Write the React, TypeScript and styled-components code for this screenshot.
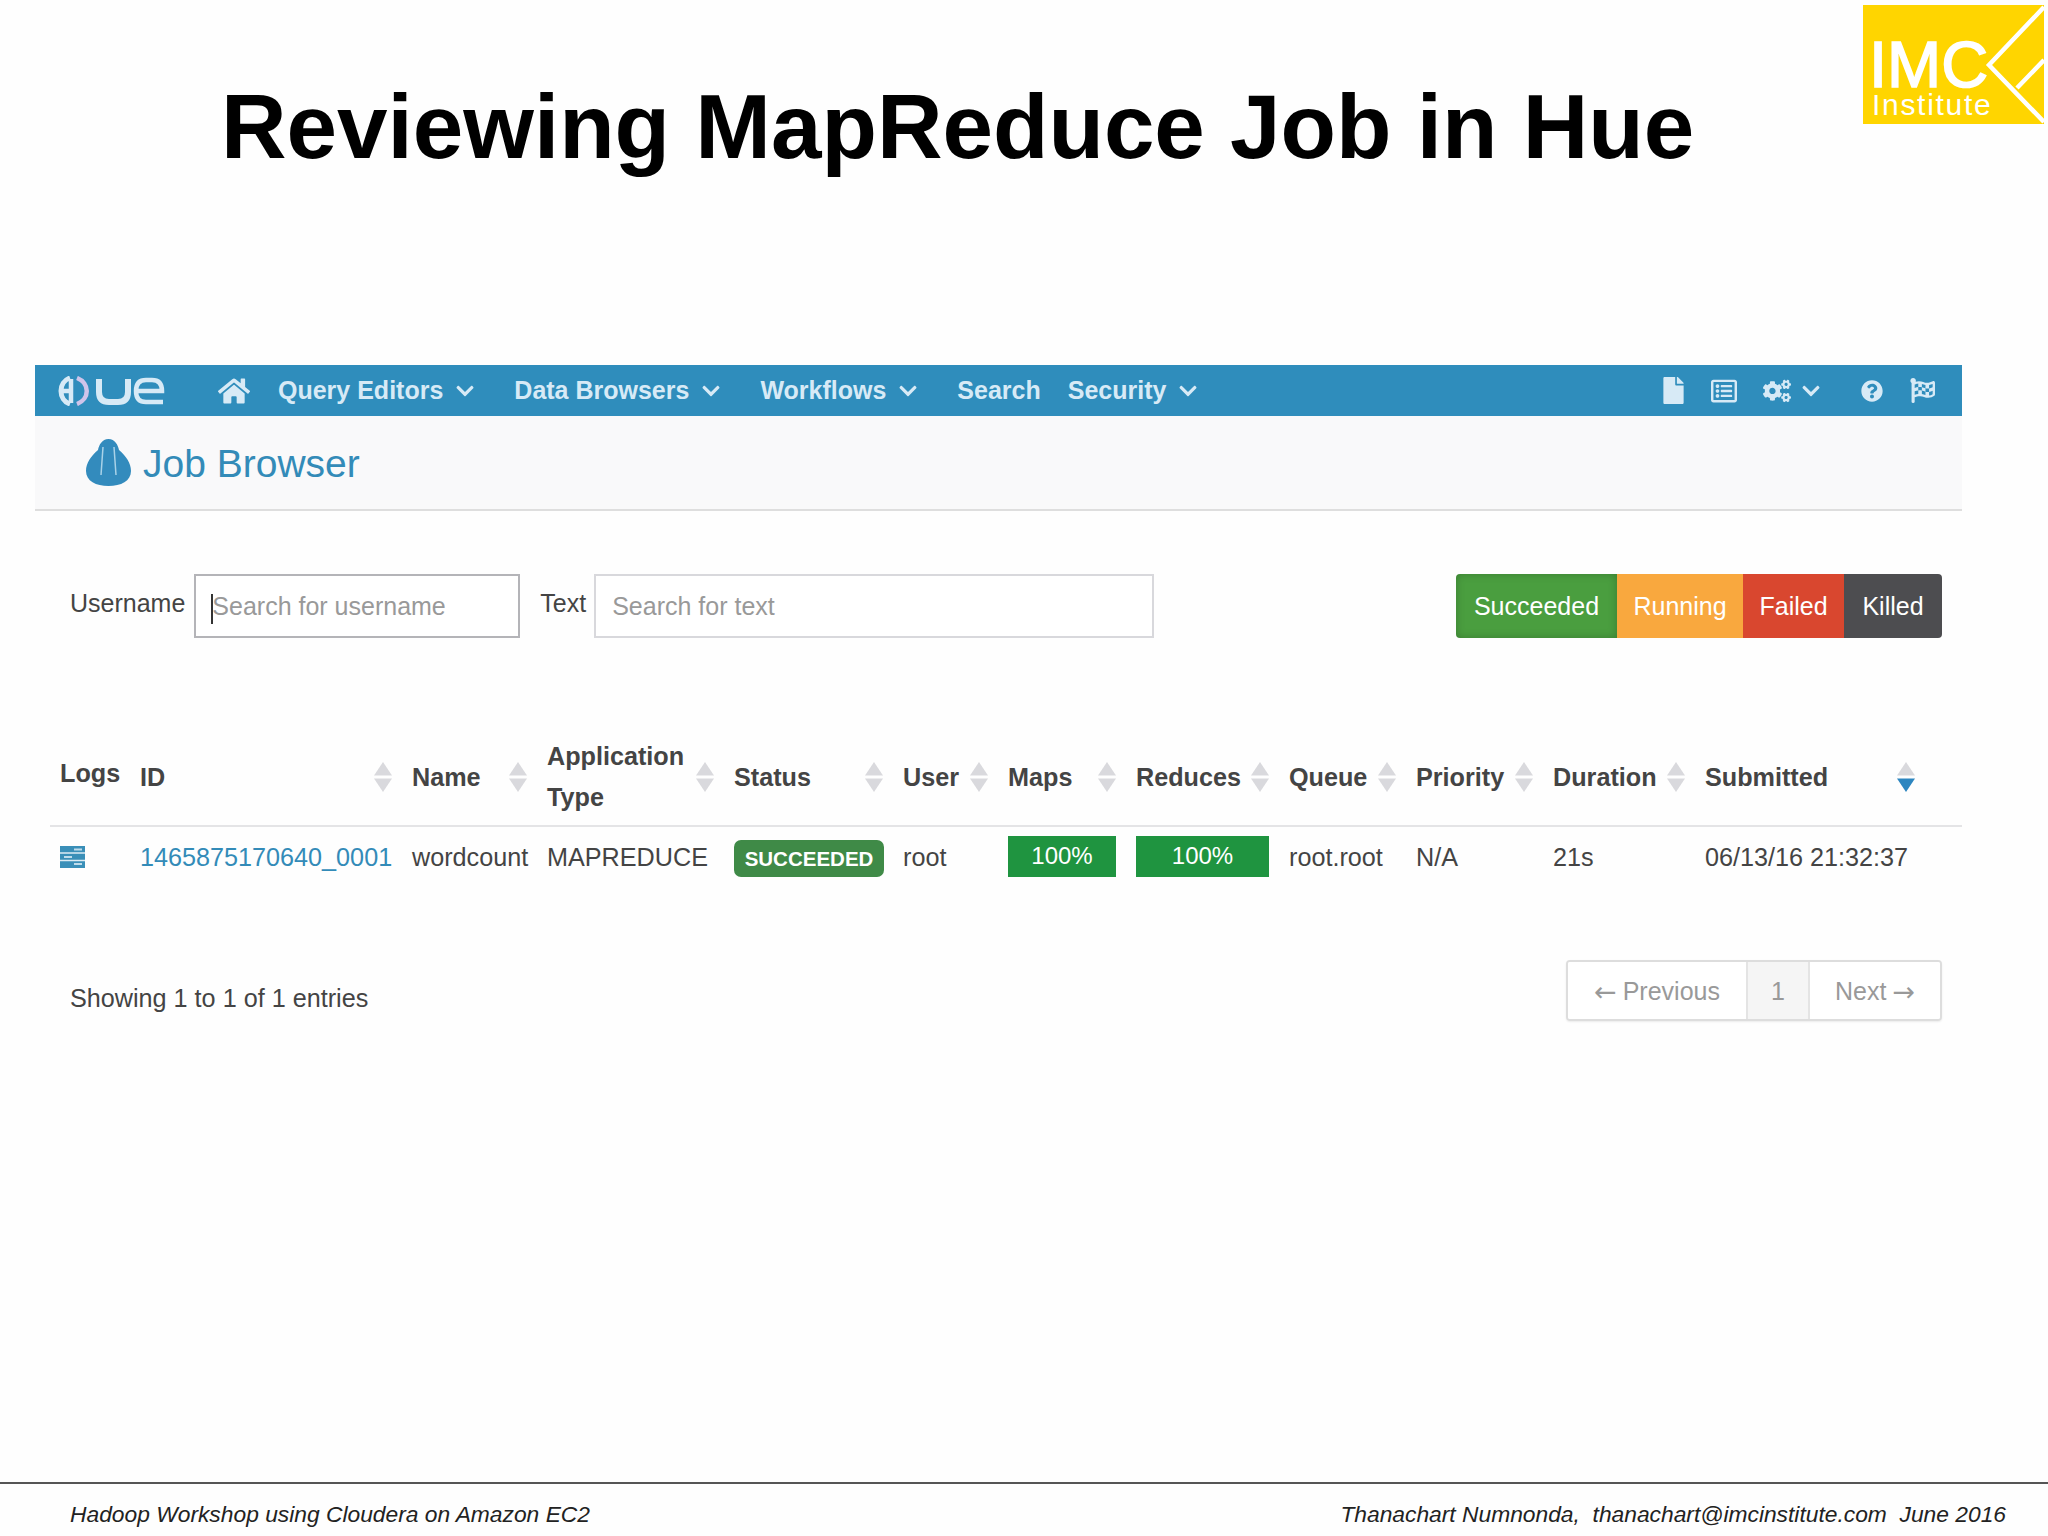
import styled, { createGlobalStyle } from "styled-components"
import { FaHome, FaChevronDown, FaFile, FaRegListAlt, FaCogs, FaQuestionCircle, FaFlagCheckered } from "react-icons/fa"

const GlobalStyle = createGlobalStyle`
  html, body {
    margin: 0;
    padding: 0;
    background: #FEFEFE;
    font-family: "Liberation Sans", Arial, sans-serif;
  }
  * { box-sizing: border-box; }
`

const Slide = styled.div`
  width: 2048px;
  height: 1536px;
  display: flex;
  flex-direction: column;
  overflow: hidden;
`

const SlideHeader = styled.header`
  height: 365px;
  display: flex;
  align-items: flex-start;
  justify-content: space-between;
  padding: 5px 4px 0 221px;
`

const SlideTitle = styled.h1`
  margin: 68px 0 0;
  font-size: 90.8px;
  line-height: 108px;
  font-weight: 700;
  color: #000;
  white-space: nowrap;
`

const Frame = styled.div`
  width: 1927px;
  margin-left: 35px;
`

const NavBar = styled.nav`
  height: 51px;
  background: #2F8DBC;
  color: #D7EAF6;
  display: flex;
  align-items: center;
  padding: 0 27px 0 21px;
  font-size: 25px;
  font-weight: 700;
`

const HueMark = styled.svg`
  width: 109px;
  height: 30px;
  margin-right: 53px;
  flex: none;
`

const HomeLink = styled.span`
  display: flex;
  font-size: 32px;
  margin-right: 28px;
`

const NavItem = styled.span<{ $after: number }>`
  display: flex;
  align-items: center;
  gap: 12px;
  margin-right: ${(p) => p.$after}px;
  white-space: nowrap;

  svg {
    font-size: 20px;
  }
`

const NavTools = styled.div`
  margin-left: auto;
  display: flex;
  align-items: center;
`

const NavTool = styled.span<{ $gap: number; $size: number }>`
  display: flex;
  margin-left: ${(p) => p.$gap}px;
  font-size: ${(p) => p.$size}px;
`

const SubNav = styled.div`
  height: 95px;
  background: #F9F9FA;
  border-bottom: 2px solid #DEDEDE;
  display: flex;
  align-items: center;
  gap: 11px;
  padding: 0 0 0 50px;
`

const HatIcon = styled.svg`
  width: 47px;
  height: 47px;
  flex: none;
`

const PageTitle = styled.div`
  font-size: 39px;
  color: #338BB8;
  margin-top: 3px;
`

const FilterRow = styled.div`
  margin-top: 63px;
  height: 64px;
  display: flex;
  align-items: stretch;
  padding: 0 20px 0 35px;
`

const FilterLabel = styled.label<{ $gap: number }>`
  font-size: 25px;
  color: #444;
  line-height: 58px;
  margin-right: ${(p) => p.$gap}px;
`

const InputBox = styled.div<{ $width: number; $after: number }>`
  position: relative;
  width: ${(p) => p.$width}px;
  margin-right: ${(p) => p.$after}px;
`

const SearchInput = styled.input<{ $dark?: boolean }>`
  width: 100%;
  height: 100%;
  padding: 0 16px;
  border: 2px solid ${(p) => (p.$dark ? "#B4B4B8" : "#D8D8DC")};
  background: #FFF;
  font-family: inherit;
  font-size: 25px;
  outline: none;

  &::placeholder {
    color: #999;
    opacity: 1;
  }
`

const Caret = styled.span`
  position: absolute;
  left: 17px;
  top: 20px;
  width: 2px;
  height: 30px;
  background: #333;
`

const StatusGroup = styled.div`
  margin-left: auto;
  display: grid;
  grid-template-columns: 161px 126px 101px 98px;
  border-radius: 4px;
  overflow: hidden;
`

const StatusButton = styled.div<{ $bg: string; $pressed?: boolean }>`
  display: flex;
  align-items: center;
  justify-content: center;
  background: ${(p) => p.$bg};
  box-shadow: ${(p) => (p.$pressed ? "inset 0 0 8px rgba(0, 0, 0, 0.22)" : "none")};
  color: #FFF;
  font-size: 25px;
`

const JobTable = styled.table`
  width: 1912px;
  margin: 90px 0 0 15px;
  border-collapse: collapse;
  table-layout: fixed;
  font-size: 25.2px;
  color: #444;
`

const HeadCell = styled.th`
  padding: 8px 10px 7px 10px;
  border-bottom: 2px solid #E4E4E6;
  font-weight: 700;
  line-height: 41px;
  text-align: left;
  vertical-align: middle;

  &:last-child {
    padding-right: 47px;
  }
`

const HeadInner = styled.div<{ $lift?: boolean }>`
  display: flex;
  align-items: center;
  justify-content: space-between;
  margin-top: ${(p) => (p.$lift ? "-8px" : "0")};
`

const SortIcon = styled.svg`
  width: 18px;
  height: 30px;
  flex: none;
`

const BodyCell = styled.td`
  padding: 11px 10px 9px;
  height: 58px;
  white-space: nowrap;
  overflow: visible;
  vertical-align: middle;
`

const LogsIcon = styled.svg`
  display: block;
  width: 25px;
  height: 22px;
  margin-top: -2px;
`

const JobLink = styled.a`
  color: #338BB8;
  text-decoration: none;
`

const StatusBadge = styled.span`
  display: block;
  width: 150px;
  height: 37px;
  margin-top: 1px;
  border-radius: 7px;
  background: #3F8A47;
  color: #FFF;
  font-size: 20.5px;
  font-weight: 700;
  line-height: 38px;
  text-align: center;
`

const ProgressBar = styled.div`
  height: 41px;
  margin-top: -2px;
  background: #1F9440;
  color: #FFF;
  font-size: 24px;
  line-height: 40px;
  text-align: center;
`

const TableFooter = styled.div`
  margin-top: 74px;
  display: flex;
  justify-content: space-between;
  align-items: flex-start;
  padding: 0 20px 0 35px;
`

const EntryCount = styled.div`
  margin-top: 24px;
  font-size: 25.2px;
  color: #444;
`

const Pagination = styled.div`
  display: grid;
  grid-template-columns: 178px 64px 130px;
  height: 61px;
  border: 2px solid #DDD;
  border-radius: 4px;
  box-shadow: 0 1px 2px rgba(0, 0, 0, 0.08);
  overflow: hidden;
`

const PageCell = styled.div<{ $active?: boolean }>`
  display: flex;
  align-items: center;
  justify-content: center;
  gap: 6px;
  padding-top: 2px;
  font-size: 25px;
  color: #999;
  background: ${(p) => (p.$active ? "#F5F5F5" : "#FFF")};
  border-left: ${(p) => (p.$active ? "2px solid #E4E4E4" : "none")};
  border-right: ${(p) => (p.$active ? "2px solid #E4E4E4" : "none")};
`

const PageArrow = styled.span`
  font-family: "DejaVu Sans", sans-serif;
  font-size: 27px;
  line-height: 1;
`

const SlideFooter = styled.footer`
  margin-top: auto;
  height: 54px;
  border-top: 2px solid #555;
  display: flex;
  justify-content: space-between;
  padding: 17px 42px 0 70px;
  font-size: 22.8px;
  font-style: italic;
  color: #222;
  white-space: pre;
`

const columns = [
  { label: "Logs", width: 80 },
  { label: "ID", width: 272, sort: true },
  { label: "Name", width: 135, sort: true },
  { label: "Application Type", width: 187, sort: true },
  { label: "Status", width: 169, sort: true },
  { label: "User", width: 105, sort: true },
  { label: "Maps", width: 128, sort: true },
  { label: "Reduces", width: 153, sort: true },
  { label: "Queue", width: 127, sort: true },
  { label: "Priority", width: 137, sort: true },
  { label: "Duration", width: 152, sort: true },
  { label: "Submitted", width: 267, sort: true, active: true },
]

function Sort({ active }: { active?: boolean }) {
  return (
    <SortIcon viewBox="0 0 18 30">
      <path d="M9 0L18 13.5H0Z" fill="#D9D9DD" />
      <path d="M0 16.5H18L9 30Z" fill={active ? "#2D86C0" : "#D9D9DD"} />
    </SortIcon>
  )
}

export default function App() {
  return (
    <Slide>
      <GlobalStyle />
      <SlideHeader>
        <SlideTitle>Reviewing MapReduce Job in Hue</SlideTitle>
        <svg width="181" height="119" viewBox="0 0 181 119">
          <rect width="181" height="119" fill="#FFD500" />
          <path d="M181 2L126 60L181 117M154 83L181 55" fill="none" stroke="#FFF" strokeWidth="4.5" />
          <text x="6" y="82" fill="#FFF" stroke="#FFF" strokeWidth="1.6" fontFamily="Liberation Sans" fontSize="65">IMC</text>
          <text x="9" y="110" fill="#FFF" fontFamily="Liberation Sans" fontSize="30" letterSpacing="1.7">Institute</text>
        </svg>
      </SlideHeader>

      <Frame>
        <NavBar>
          <HueMark viewBox="0 0 109 30">
            <path d="M14 2C2 6 2 24 14 28" fill="none" stroke="#D7EAF6" strokeWidth="5" />
            <path d="M5 15H15M15 3V27" fill="none" stroke="#D7EAF6" strokeWidth="4.5" />
            <path d="M21 2C34 7 34 23 21 28" fill="none" stroke="#CFC4EA" strokeWidth="4.5" />
            <path d="M43 3V16Q43 26 53 26H62Q72 26 72 16V3" fill="none" stroke="#D7EAF6" strokeWidth="6" />
            <path d="M80 15Q80 4 90 4H96Q106 4 106 15H80M80 15Q80 26 90 26H107" fill="none" stroke="#D7EAF6" strokeWidth="4.5" />
          </HueMark>
          <HomeLink><FaHome /></HomeLink>
          <NavItem $after={39}>Query Editors <FaChevronDown /></NavItem>
          <NavItem $after={39}>Data Browsers <FaChevronDown /></NavItem>
          <NavItem $after={39}>Workflows <FaChevronDown /></NavItem>
          <NavItem $after={27}>Search</NavItem>
          <NavItem $after={0}>Security <FaChevronDown /></NavItem>
          <NavTools>
            <NavTool $gap={0} $size={27}><FaFile /></NavTool>
            <NavTool $gap={24} $size={26}><FaRegListAlt /></NavTool>
            <NavTool $gap={26} $size={28}><FaCogs /></NavTool>
            <NavTool $gap={10} $size={20}><FaChevronDown /></NavTool>
            <NavTool $gap={40} $size={22}><FaQuestionCircle /></NavTool>
            <NavTool $gap={27} $size={25}><FaFlagCheckered /></NavTool>
          </NavTools>
        </NavBar>

        <SubNav>
          <HatIcon viewBox="0 0 47 47">
            <path d="M23.5 0C17 0 14 6 13 11C6 17 1 24 1 32C1 42 11 47 23.5 47C36 47 46 42 46 32C46 24 41 17 34 11C33 6 30 0 23.5 0Z" fill="#338BBD" />
            <path d="M18 8L16 36M29 8L31 36" fill="none" stroke="#A9D2E8" strokeWidth="1.5" />
          </HatIcon>
          <PageTitle>Job Browser</PageTitle>
        </SubNav>

        <FilterRow>
          <FilterLabel $gap={9}>Username</FilterLabel>
          <InputBox $width={326} $after={20}>
            <SearchInput $dark placeholder="Search for username" />
            <Caret />
          </InputBox>
          <FilterLabel $gap={8}>Text</FilterLabel>
          <InputBox $width={560} $after={0}>
            <SearchInput placeholder="Search for text" />
          </InputBox>
          <StatusGroup>
            <StatusButton $bg="#4A9E3F" $pressed>Succeeded</StatusButton>
            <StatusButton $bg="#F9A83E">Running</StatusButton>
            <StatusButton $bg="#D9472F">Failed</StatusButton>
            <StatusButton $bg="#4D4D50">Killed</StatusButton>
          </StatusGroup>
        </FilterRow>

        <JobTable>
          <colgroup>
            {columns.map((c) => (
              <col key={c.label} width={c.width} />
            ))}
          </colgroup>
          <thead>
            <tr>
              {columns.map((c) => (
                <HeadCell key={c.label}>
                  <HeadInner $lift={c.label === "Logs"}>
                    <span>{c.label}</span>
                    {c.sort && <Sort active={c.active} />}
                  </HeadInner>
                </HeadCell>
              ))}
            </tr>
          </thead>
          <tbody>
            <tr>
              <BodyCell>
                <LogsIcon viewBox="0 0 25 22">
                  <rect width="25" height="22" fill="#3A8FB8" />
                  <path d="M0 7H25M0 14.5H25" stroke="#DCEBF3" strokeWidth="1.5" />
                  <path d="M14 3.5H22M4 11H12M14 18H22" stroke="#BFDCEB" strokeWidth="2" />
                </LogsIcon>
              </BodyCell>
              <BodyCell><JobLink>1465875170640_0001</JobLink></BodyCell>
              <BodyCell>wordcount</BodyCell>
              <BodyCell>MAPREDUCE</BodyCell>
              <BodyCell><StatusBadge>SUCCEEDED</StatusBadge></BodyCell>
              <BodyCell>root</BodyCell>
              <BodyCell><ProgressBar>100%</ProgressBar></BodyCell>
              <BodyCell><ProgressBar>100%</ProgressBar></BodyCell>
              <BodyCell>root.root</BodyCell>
              <BodyCell>N/A</BodyCell>
              <BodyCell>21s</BodyCell>
              <BodyCell>06/13/16 21:32:37</BodyCell>
            </tr>
          </tbody>
        </JobTable>

        <TableFooter>
          <EntryCount>Showing 1 to 1 of 1 entries</EntryCount>
          <Pagination>
            <PageCell><PageArrow>←</PageArrow>Previous</PageCell>
            <PageCell $active>1</PageCell>
            <PageCell>Next<PageArrow>→</PageArrow></PageCell>
          </Pagination>
        </TableFooter>
      </Frame>

      <SlideFooter>
        <span>Hadoop Workshop using Cloudera on Amazon EC2</span>
        <span>Thanachart Numnonda,  thanachart@imcinstitute.com  June 2016</span>
      </SlideFooter>
    </Slide>
  )
}
